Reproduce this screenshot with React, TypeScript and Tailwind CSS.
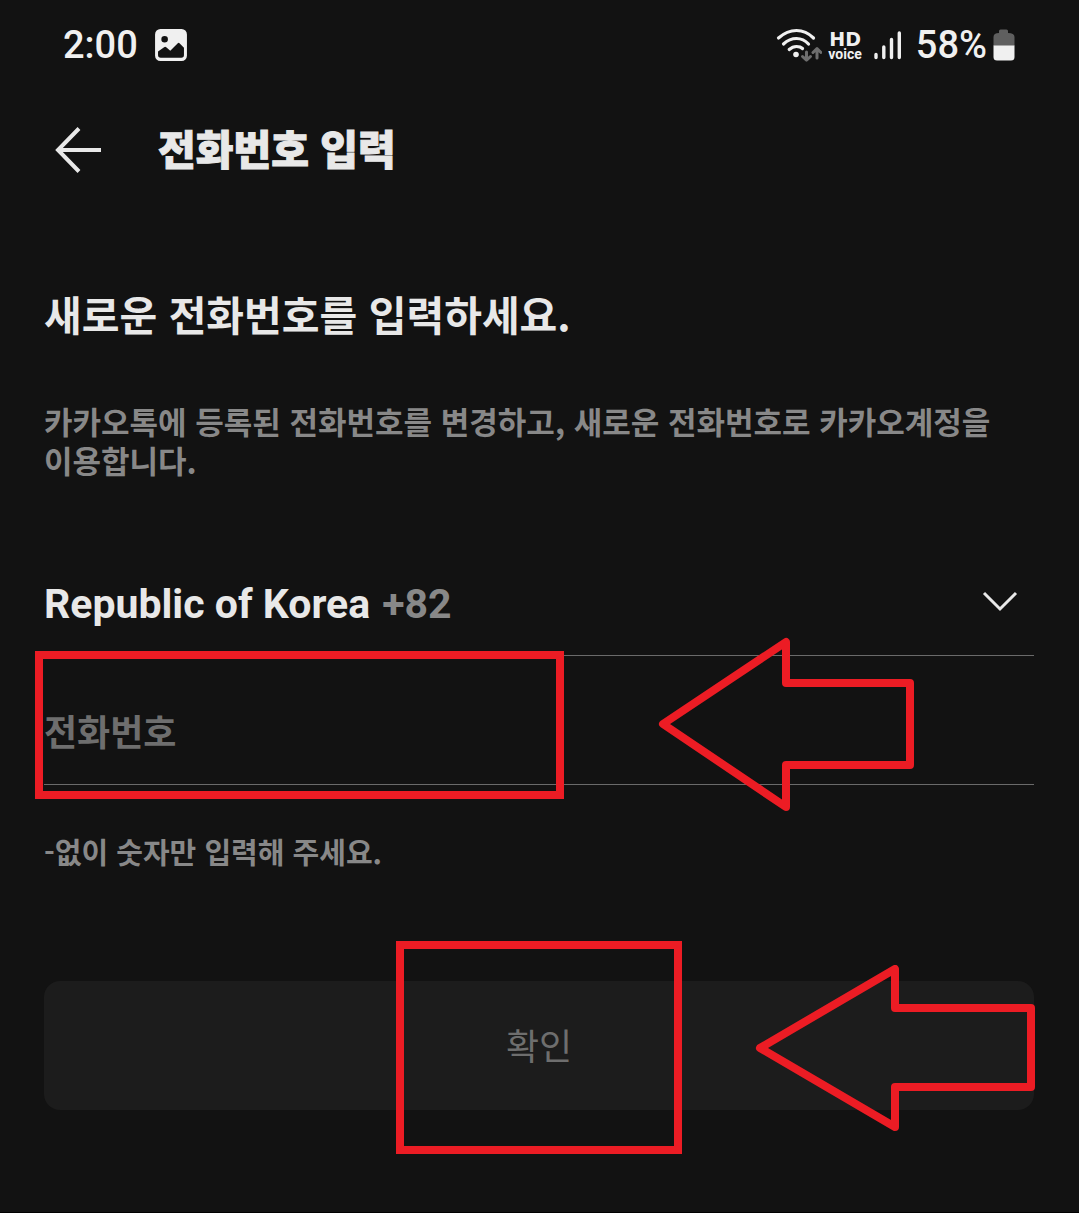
import { useState } from "react";

function ImageIcon() {
  return (
    <svg viewBox="0 0 32 32" className="size-[34px]" aria-hidden="true">
      <path
        fillRule="evenodd"
        fill="#f0f0f0"
        d="M6 1H26A5 5 0 0 1 31 6V26A5 5 0 0 1 26 31H6A5 5 0 0 1 1 26V6A5 5 0 0 1 6 1ZM10 7.500A3.100 3.100 0 1 0 10 13.700A3.100 3.100 0 1 0 10 7.500ZM3.800 22.200V25.500Q3.800 28 6.300 28H25.700Q28.200 28 28.200 25.500V18.500L24 14.300Q23.200 13.500 22.400 14.300L15.300 21.500L11.500 18.100Q10.500 17.300 9.500 18.100Z"
      />
    </svg>
  );
}

function WifiIcon() {
  return (
    <svg viewBox="0 0 46 36" className="h-9 w-[46px]" fill="none" strokeLinecap="round" aria-hidden="true">
      <g stroke="#f0f0f0" strokeWidth="3.200">
        <path d="M2.500 11Q11 3.500 20.500 3.500T37.500 11" />
        <path d="M7.500 17Q13.500 11.500 20.500 11.500T32.500 17" />
        <path d="M13.200 22.500Q16.500 19.500 20.500 19.500T26.500 21.500" />
      </g>
      <circle cx="20" cy="27.500" r="2.800" fill="#f0f0f0" />
      <g stroke="#6e6e6e" strokeWidth="3" strokeLinejoin="round">
        <path d="M30.500 25V33M26.500 29.500L30.500 33.200L34.500 29.500" />
        <path d="M41 31V22M37 25.500L41 21.700L45 25.500" />
      </g>
    </svg>
  );
}

function SignalIcon() {
  return (
    <svg viewBox="0 0 28 32" className="h-8 w-7" stroke="#f0f0f0" strokeWidth="3.400" strokeLinecap="round" aria-hidden="true">
      <path d="M2 25.500V28.500M9.800 18V28.500M17.500 10.500V28.500M25.300 4V28.500" />
    </svg>
  );
}

function BatteryIcon() {
  return (
    <svg viewBox="0 0 22 32" className="h-8 w-[22px]" aria-hidden="true">
      <path d="M6 4V2Q6 0.500 7.500 0.500H13.500Q15 0.500 15 2V4Q21.500 4 21.500 8V17H0.500V8Q0.500 4 6 4Z" fill="#5f5f5f" />
      <path d="M0.500 16.500H21.500V28Q21.500 31.500 18 31.500H4Q0.500 31.500 0.500 28Z" fill="#f0f0f0" />
    </svg>
  );
}

function StatusBar() {
  return (
    <div className="flex h-[90px] items-center justify-between pr-16 pl-[63px] font-[Roboto,sans-serif] text-[38px] leading-none font-medium text-[#f0f0f0]">
      <div className="flex items-center gap-4">
        <span>2:00</span>
        <ImageIcon />
      </div>
      <div className="flex items-center">
        <WifiIcon />
        <div className="ml-[6px] flex flex-col items-center font-bold">
          <span className="font-['DejaVu_Sans',sans-serif] text-[19px] leading-[18px]">HD</span>
          <span className="text-[14px] leading-3">voice</span>
        </div>
        <div className="ml-3">
          <SignalIcon />
        </div>
        <span className="ml-[14px]">58%</span>
        <div className="ml-[6px]">
          <BatteryIcon />
        </div>
      </div>
    </div>
  );
}

export default function App() {
  const [phone, setPhone] = useState("");
  return (
    <main
      lang="ko"
      className="min-h-screen border-b border-black bg-[#121212] font-['Noto_Sans_CJK_KR',sans-serif] font-bold text-[#e8e8e8]"
    >
      <StatusBar />
      <header className="flex h-[120px] items-center gap-14 px-[54px]">
        <button type="button" aria-label="뒤로" className="shrink-0">
          <svg viewBox="0 0 48 48" className="size-12" fill="none" stroke="#e8e8e8" strokeWidth="4" aria-hidden="true">
            <path d="M25 2.500L4 24L25 45.500M3 24H47" />
          </svg>
        </button>
        <h1 className="pb-[6px] text-[41px] leading-[48px] font-black [-webkit-text-stroke:1px_#e8e8e8]">전화번호 입력</h1>
      </header>

      <form className="pt-[79px] pr-[45px] pl-11" onSubmit={(e) => e.preventDefault()}>
        <h2 className="text-[41px] leading-[48px]">새로운 전화번호를 입력하세요.</h2>
        <p className="mt-16 text-[31px] leading-[39px] break-keep text-[#888888]">
          카카오톡에 등록된 전화번호를 변경하고, 새로운 전화번호로 카카오계정을 이용합니다.
        </p>

        <div className="mt-[74px] flex h-[103px] items-center border-b border-[#6a6a6a] font-[Roboto,sans-serif] text-[41px] leading-[48px]">
          <select aria-label="국가" className="appearance-none bg-transparent [field-sizing:content]">
            <option>Republic of Korea</option>
          </select>
          <span className="ml-3 text-[#888888]">+82</span>
          <svg viewBox="0 0 36 24" className="mr-4 mb-1 ml-auto h-6 w-9" fill="none" stroke="#e8e8e8" strokeWidth="3" aria-hidden="true">
            <path d="M2 3L18 19L34 3" />
          </svg>
        </div>

        <div className="relative">
          <input
            type="tel"
            aria-label="전화번호"
            placeholder="전화번호"
            value={phone}
            onChange={(e) => setPhone(e.target.value)}
            className="block h-[129px] w-full border-b border-[#6a6a6a] bg-transparent pt-5 text-[36px] outline-none placeholder:text-[#6e6e6e] placeholder:opacity-100"
          />
          <div className="pointer-events-none absolute -top-[5px] -left-[9px] h-[148px] w-[529px] border-8 border-[#ec1c24]" />
          <svg
            viewBox="0 0 256 174"
            className="pointer-events-none absolute -top-[19px] right-[120px] h-[174px] w-64"
            fill="none"
            stroke="#ec1c24"
            strokeWidth="8"
            strokeLinejoin="round"
            aria-hidden="true"
          >
            <path d="M5 87L128 5V46H252V128H128V170Z" />
          </svg>
        </div>

        <p className="mt-[46px] text-[29px] leading-10 text-[#888888]">-없이 숫자만 입력해 주세요.</p>

        <div className="relative mt-[110px]">
          <button
            type="submit"
            className="block h-[129px] w-full rounded-2xl bg-[#1c1c1c] pb-1 text-[36px] font-normal text-[#6e6e6e]"
          >
            확인
          </button>
          <div className="pointer-events-none absolute -top-10 left-1/2 h-[213px] w-[286px] -translate-x-1/2 border-8 border-[#ec1c24]" />
          <svg
            viewBox="0 0 280 168"
            className="pointer-events-none absolute -top-4 -right-px h-[168px] w-70"
            fill="none"
            stroke="#ec1c24"
            strokeWidth="8"
            strokeLinejoin="round"
            aria-hidden="true"
          >
            <path d="M5 83L140 4V43H276V122H140V162Z" />
          </svg>
        </div>
      </form>
    </main>
  );
}
